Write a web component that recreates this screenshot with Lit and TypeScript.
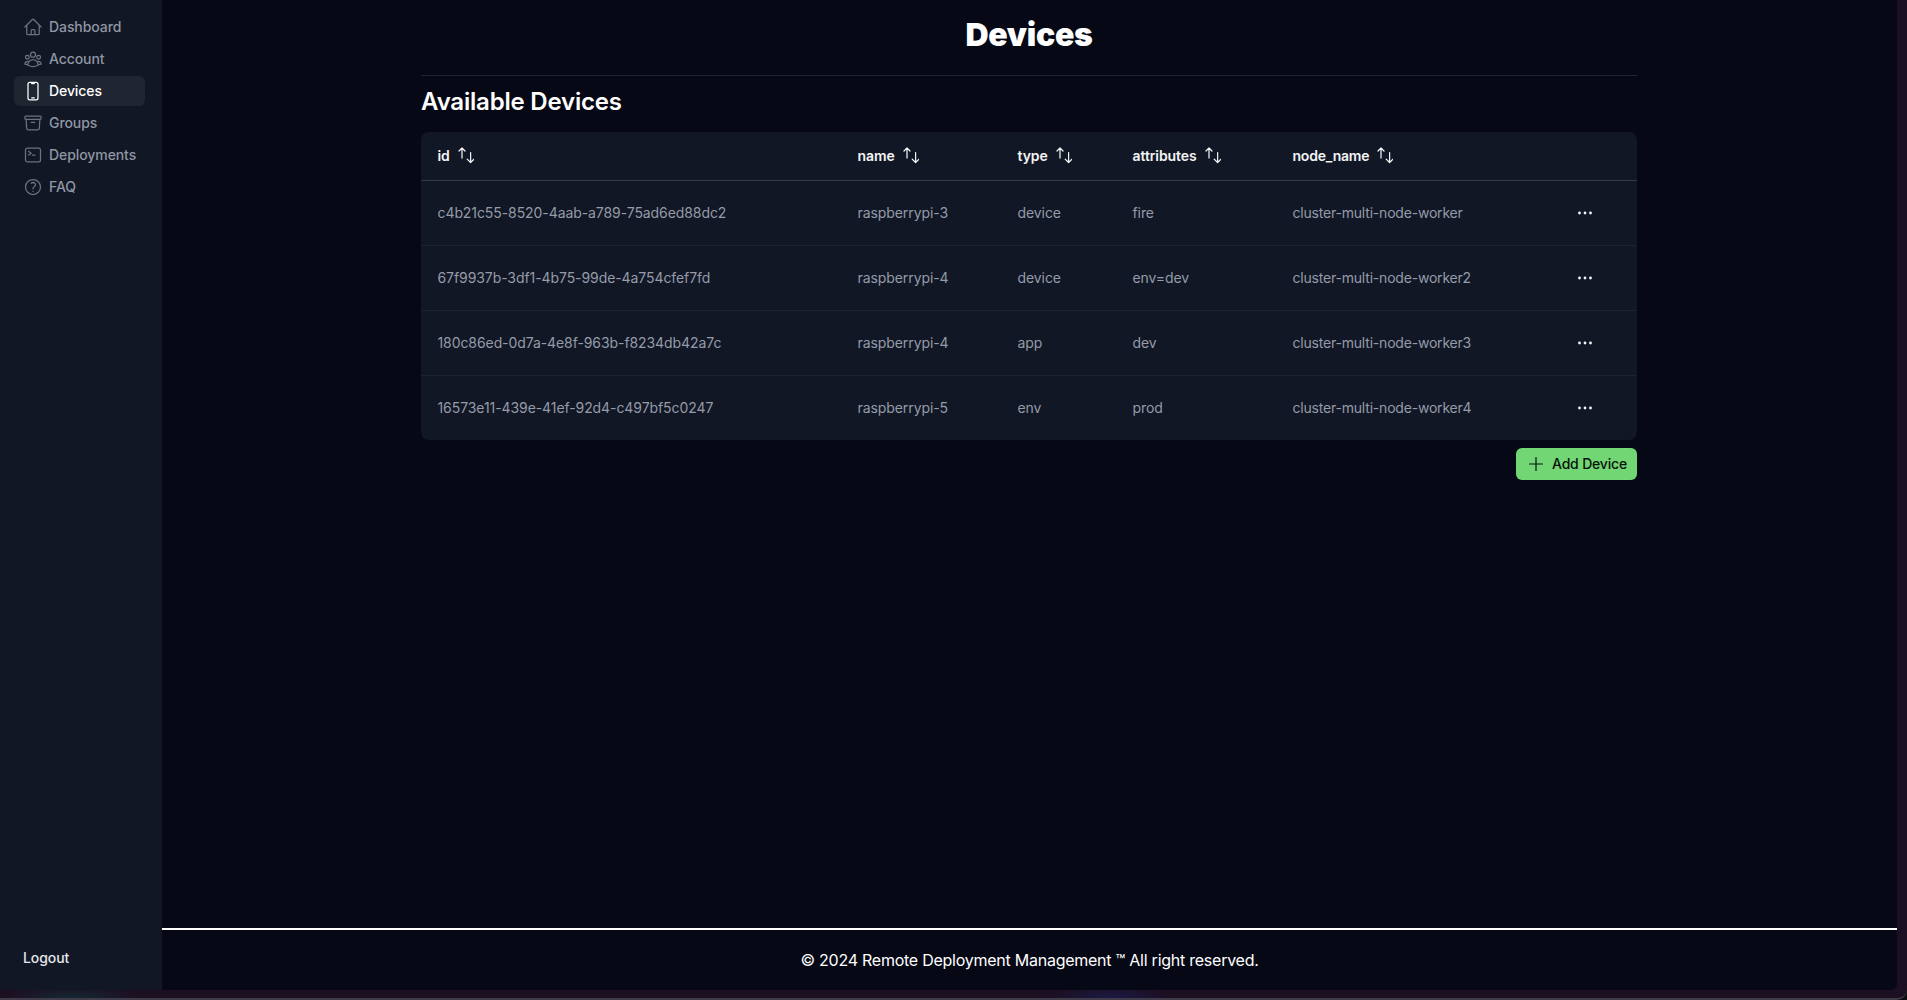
import { LitElement, css, html, svg } from 'lit';
import { customElement } from 'lit/decorators.js';

const navItems = [
  { label: 'Dashboard', d: 'M2.25 12l8.954-8.955c.44-.439 1.152-.439 1.591 0L21.75 12M4.5 9.75v10.125c0 .621.504 1.125 1.125 1.125H9.75v-4.875c0-.621.504-1.125 1.125-1.125h2.25c.621 0 1.125.504 1.125 1.125V21h4.125c.621 0 1.125-.504 1.125-1.125V9.75M8.25 21h8.25' },
  { label: 'Account', d: 'M18 18.72a9.094 9.094 0 003.741-.479 3 3 0 00-4.682-2.72m.94 3.198l.001.031c0 .225-.012.447-.037.666A11.944 11.944 0 0112 21c-2.17 0-4.207-.576-5.963-1.584A6.062 6.062 0 016 18.719m12 0a5.971 5.971 0 00-.941-3.197m0 0A5.995 5.995 0 0012 12.75a5.995 5.995 0 00-5.058 2.772m0 0a3 3 0 00-4.681 2.72 8.986 8.986 0 003.74.477m.94-3.197a5.971 5.971 0 00-.94 3.197M15 6.75a3 3 0 11-6 0 3 3 0 016 0zm6 3a2.25 2.25 0 11-4.5 0 2.25 2.25 0 014.5 0zm-13.5 0a2.25 2.25 0 11-4.5 0 2.25 2.25 0 014.5 0z' },
  { label: 'Devices', active: true, d: 'M10.5 1.5H8.25A2.25 2.25 0 006 3.75v16.5a2.25 2.25 0 002.25 2.25h7.5A2.25 2.25 0 0018 20.25V3.75a2.25 2.25 0 00-2.25-2.25H13.5m-3 0V3h3V1.5m-3 0h3m-3 18.75h3' },
  { label: 'Groups', d: 'M20.25 7.5l-.625 10.632a2.25 2.25 0 01-2.247 2.118H6.622a2.25 2.25 0 01-2.247-2.118L3.75 7.5M10 11.25h4M3.375 7.5h17.25c.621 0 1.125-.504 1.125-1.125v-1.5c0-.621-.504-1.125-1.125-1.125H3.375c-.621 0-1.125.504-1.125 1.125v1.5c0 .621.504 1.125 1.125 1.125z' },
  { label: 'Deployments', d: 'M6.75 7.5l3 2.25-3 2.25m4.5 0h3m-9 8.25h13.5A2.25 2.25 0 0021 18V6a2.25 2.25 0 00-2.25-2.25H5.25A2.25 2.25 0 003 6v12a2.25 2.25 0 002.25 2.25z' },
  { label: 'FAQ', d: 'M9.879 7.519c1.171-1.025 3.071-1.025 4.242 0 1.172 1.025 1.172 2.687 0 3.712-.203.179-.43.326-.67.442-.745.361-1.45.999-1.45 1.827v.75M21 12a9 9 0 11-18 0 9 9 0 0118 0zm-9 5.25h.008v.008H12v-.008z' },
];

const columns = ['id', 'name', 'type', 'attributes', 'node_name'];

const devices = [
  ['c4b21c55-8520-4aab-a789-75ad6ed88dc2', 'raspberrypi-3', 'device', 'fire', 'cluster-multi-node-worker'],
  ['67f9937b-3df1-4b75-99de-4a754cfef7fd', 'raspberrypi-4', 'device', 'env=dev', 'cluster-multi-node-worker2'],
  ['180c86ed-0d7a-4e8f-963b-f8234db42a7c', 'raspberrypi-4', 'app', 'dev', 'cluster-multi-node-worker3'],
  ['16573e11-439e-41ef-92d4-c497bf5c0247', 'raspberrypi-5', 'env', 'prod', 'cluster-multi-node-worker4'],
];

const sortIcon = svg`<svg class="sort" viewBox="0 0 18 18" fill="none" stroke="currentColor" stroke-width="1.25" stroke-linecap="round" stroke-linejoin="round"><path d="M6 12V2M3 5l3-3 3 3"/><path d="M15 6.5V16.5M11.6 13.1l3.4 3.4 3.4-3.4" transform="translate(-.4 0)"/></svg>`;

@customElement('app-root')
export class AppRoot extends LitElement {
  static styles = css`
    :host {
      display: block;
      height: 100vh;
      background: #0c0b10;
      font-family: Inter, "Liberation Sans", sans-serif;
      color: #fff;
    }
    * {
      box-sizing: border-box;
    }
    .window {
      display: flex;
      height: 100%;
      padding: 0 10px 8px 0;
      border-bottom: 2px solid #403b48;
      border-bottom-right-radius: 10px;
      background:
        radial-gradient(ellipse 60px 12px at 1110px 100%, #1a1a46, transparent),
        radial-gradient(ellipse 70px 12px at 70px 100%, #132833, transparent),
        #1d0f22;
    }
    .sidebar {
      width: 162px;
      flex: none;
      display: flex;
      flex-direction: column;
      justify-content: space-between;
      padding: 12px 17px 24px 14px;
      background: #111725;
    }
    .nav {
      display: flex;
      flex-direction: column;
      gap: 2px;
    }
    .nav-item {
      display: flex;
      align-items: center;
      gap: 6px;
      height: 30px;
      padding: 0 0 1px 9px;
      border-radius: 6px;
      font-size: 14px;
      font-weight: 500;
      letter-spacing: -0.08px;
      color: #8f96a3;
    }
    .nav-item svg {
      width: 20px;
      height: 20px;
      flex: none;
      stroke: #6b7280;
    }
    .nav-item.active {
      background: #1f2531;
      color: #fff;
    }
    .nav-item.active svg {
      stroke: #fff;
    }
    .logout {
      padding-left: 9px;
      font-size: 14px;
      font-weight: 500;
      line-height: 17px;
      letter-spacing: -0.08px;
      color: #e5e7eb;
    }
    .main {
      flex: 1;
      min-width: 0;
      display: flex;
      flex-direction: column;
      background: #060815;
      border-bottom-right-radius: 6px;
    }
    .content {
      flex: 1;
      width: 1216px;
      margin-left: 259px;
    }
    h1 {
      margin: 0;
      height: 76px;
      padding-top: 14px;
      border-bottom: 1px solid #1f2430;
      text-align: center;
      font-size: 32px;
      line-height: 42px;
      font-weight: 900;
      letter-spacing: -0.3px;
    }
    h2 {
      margin: 0;
      padding: 9px 0 13px;
      font-size: 24px;
      line-height: 34px;
      font-weight: 600;
      letter-spacing: -0.2px;
    }
    .table {
      background: #111725;
      border-radius: 8px;
      overflow: hidden;
    }
    .row {
      display: grid;
      grid-template-columns: 420px 160px 115px 160px 1fr 90px;
      align-items: center;
      height: 65px;
      padding-bottom: 1px;
      font-size: 14px;
      letter-spacing: -0.08px;
      color: #959ba8;
      border-top: 1px solid #1c222e;
    }
    .row > div {
      padding-left: 16.5px;
    }
    .row > div:nth-child(5) {
      letter-spacing: -0.2px;
    }
    .row > .menu {
      padding-left: 28px;
    }
    .row.head {
      height: 49px;
      padding-bottom: 2px;
      border-top: none;
      border-bottom: 1px solid #343a46;
      font-weight: 600;
      color: #f3f4f6;
    }
    .row.head + .row {
      border-top: none;
      height: 64px;
    }
    .th {
      display: flex;
      align-items: center;
      gap: 6px;
    }
    .sort {
      width: 18px;
      height: 18px;
      flex: none;
      color: #f3f4f6;
    }
    .dots {
      width: 20px;
      height: 20px;
      display: block;
      color: #f3f4f6;
    }
    .actions {
      display: flex;
      justify-content: flex-end;
      margin-top: 8px;
    }
    button {
      display: flex;
      align-items: center;
      gap: 7px;
      height: 32px;
      padding: 0 10px 1px 11px;
      border: none;
      border-radius: 6px;
      background: #73d675;
      color: #06120a;
      font: 500 14px Inter, "Liberation Sans", sans-serif;
      letter-spacing: -0.18px;
    }
    button svg {
      width: 18px;
      height: 18px;
    }
    footer {
      flex: none;
      height: 62px;
      border-top: 2px solid #fff;
      display: flex;
      align-items: center;
      justify-content: center;
      font-size: 16px;
      font-weight: 400;
      letter-spacing: -0.25px;
    }
  `;

  render() {
    return html`
      <div class="window">
        <aside class="sidebar">
          <nav class="nav">
            ${navItems.map(
              (item) => html`
                <div class="nav-item ${item.active ? 'active' : ''}">
                  <svg viewBox="0 0 24 24" fill="none" stroke-width="1.5" stroke-linecap="round" stroke-linejoin="round"><path d=${item.d} /></svg>
                  ${item.label}
                </div>
              `
            )}
          </nav>
          <div class="logout">Logout</div>
        </aside>
        <div class="main">
          <main class="content">
            <h1>Devices</h1>
            <h2>Available Devices</h2>
            <div class="table">
              <div class="row head">
                ${columns.map((c) => html`<div class="th">${c} ${sortIcon}</div>`)}
                <div></div>
              </div>
              ${devices.map(
                (d) => html`
                  <div class="row">
                    ${d.map((v) => html`<div>${v}</div>`)}
                    <div class="menu">
                      <svg class="dots" viewBox="0 0 20 20" fill="currentColor"><circle cx="4.5" cy="10" r="1.4" /><circle cx="10" cy="10" r="1.4" /><circle cx="15.5" cy="10" r="1.4" /></svg>
                    </div>
                  </div>
                `
              )}
            </div>
            <div class="actions">
              <button>
                <svg viewBox="0 0 18 18" fill="none" stroke="currentColor" stroke-width="1.2" stroke-linecap="round"><path d="M9 2.5v13M2.5 9h13" /></svg>
                Add Device
              </button>
            </div>
          </main>
          <footer>© 2024 Remote Deployment Management ™ All right reserved.</footer>
        </div>
      </div>
    `;
  }
}
